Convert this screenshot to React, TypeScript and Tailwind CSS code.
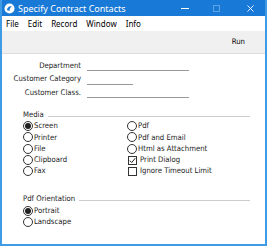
import React from 'react';

const body = { fontFamily: '"DejaVu Sans Condensed", "DejaVu Sans", sans-serif', fontStretch: 'condensed' };
const ui = { fontFamily: '"Noto Sans", "Open Sans", sans-serif' };

function Radio({ checked, label }: { checked?: boolean; label: string }) {
  return (
    <div className="flex items-center h-[11.3px] whitespace-nowrap">
      <span className="w-[10px] h-[10px] shrink-0 rounded-full border border-[#333] flex items-center justify-center bg-white">
        {checked && <span className="w-[6px] h-[6px] rounded-full bg-[#222]" />}
      </span>
      <span className="ml-[1px]">{label}</span>
    </div>
  );
}

function Check({ checked, label }: { checked?: boolean; label: string }) {
  return (
    <div className="flex items-center h-[11.3px] whitespace-nowrap">
      <span className="w-[9px] h-[9px] shrink-0 border border-[#333] flex items-center justify-center bg-white ml-[1px]">
        {checked && (
          <svg width="7" height="7" viewBox="0 0 7 7">
            <path d="M0.8 3.6 L2.7 5.5 L6.3 1.2" stroke="#222" strokeWidth="1" fill="none" />
          </svg>
        )}
      </span>
      <span className="ml-[3px]">{label}</span>
    </div>
  );
}

function Field({ label, width }: { label: string; width: string }) {
  return (
    <div className="flex items-center h-[13.5px] whitespace-nowrap">
      <span className="w-[79px] text-right">{label}</span>
      <span className={`ml-[6px] ${width} border-b border-[#999] h-[8px] mt-[3px]`} />
    </div>
  );
}

export default function App() {
  return (
    <div className="w-[267px] h-[246px] bg-white border-x-2 border-b-2 border-[#3f9be6] flex flex-col overflow-hidden text-[#222]">
      <div className="h-[16px] shrink-0 bg-[#1979d6] -mx-[2px] flex items-center text-white text-[9px]" style={ui}>
        <svg width="11" height="11" viewBox="0 0 12 12" className="ml-[4px]">
          <circle cx="6" cy="6" r="5.5" fill="#fff" />
          <path d="M3 8 C4 3 7 3 9 4 C7 4 6 6 6 9 C5 8 4 8 3 8 Z" fill="#1979d6" />
        </svg>
        <span className="ml-[3px] leading-none">Specify Contract Contacts</span>
        <span className="ml-auto w-[8px] border-t border-white mr-[24px] mt-[1px]" />
        <span className="w-[7px] h-[7px] border border-[#5fa3e3] mr-[27px]" />
        <svg width="7" height="7" viewBox="0 0 8 8" className="mr-[13px]">
          <path d="M0.5 0.5 L7.5 7.5 M7.5 0.5 L0.5 7.5" stroke="#fff" strokeWidth="1" />
        </svg>
      </div>
      <div className="h-[15px] shrink-0 flex items-center text-[8px] gap-[9px] pl-[4px] text-black" style={ui}>
        <span>File</span>
        <span>Edit</span>
        <span>Record</span>
        <span>Window</span>
        <span>Info</span>
      </div>
      <div className="h-[22px] shrink-0 bg-[#f0f0f0] flex items-center justify-end pr-[20px] text-[7.7px] text-black" style={body}>
        Run
      </div>
      <div className="h-[2px] shrink-0 border-t border-[#dcdcdc]" />
      <div className="flex-1 text-[7.7px] leading-none" style={body}>
        <div className="mt-[4px]">
          <Field label="Department" width="w-[102px]" />
          <Field label="Customer Category" width="w-[46px]" />
          <Field label="Customer Class." width="w-[102px]" />
        </div>
        <div className="mt-[10px] h-[10px] ml-[21px] mr-[15px] flex items-center">
          <span>Media</span>
          <span className="flex-1 ml-[4px] border-b border-[#ccc] mt-[3px]" />
        </div>
        <div className="ml-[21px] flex mt-[1px]">
          <div className="w-[104px]">
            <Radio checked label="Screen" />
            <Radio label="Printer" />
            <Radio label="File" />
            <Radio label="Clipboard" />
            <Radio label="Fax" />
          </div>
          <div>
            <Radio label="Pdf" />
            <Radio label="Pdf and Email" />
            <Radio label="Html as Attachment" />
            <Check checked label="Print Dialog" />
            <Check label="Ignore Timeout Limit" />
          </div>
        </div>
        <div className="mt-[17px] h-[10px] ml-[21px] mr-[15px] flex items-center">
          <span>Pdf Orientation</span>
          <span className="flex-1 ml-[4px] border-b border-[#ccc] mt-[3px]" />
        </div>
        <div className="ml-[21px] mt-[1px]">
          <Radio checked label="Portrait" />
          <Radio label="Landscape" />
        </div>
      </div>
    </div>
  );
}
